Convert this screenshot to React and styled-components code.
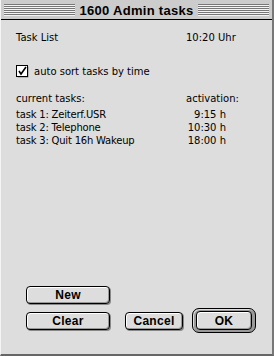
import React from "react";
import styled, { createGlobalStyle } from "styled-components";

const GlobalStyle = createGlobalStyle`
	html, body {
		margin: 0;
		padding: 0;
		background: #dddddd;
	}
`;

const Window = styled.div`
	width: 274px;
	height: 356px;
	box-sizing: border-box;
	display: flex;
	flex-direction: column;
	background: #dddddd;
	border-left: 1px solid #f4f4f4;
	border-right: 2px solid #777777;
	border-bottom: 2px solid #666666;
	font-family: "DejaVu Sans", "Liberation Sans", sans-serif;
	font-size: 10px;
	color: #000;
`;

const TitleBar = styled.div`
	height: 20px;
	flex-shrink: 0;
	display: flex;
	align-items: center;
	gap: 4px;
	padding: 0 3px 0 3px;
	background: #cccccc;
	border-bottom: 1px solid #000;
	box-sizing: border-box;
`;

const Stripes = styled.div`
	flex: 1;
	height: 12px;
	margin-top: 1px;
	background: repeating-linear-gradient(
		to bottom,
		#777777 0px,
		#777777 1px,
		#f4f4f4 1px,
		#f4f4f4 2px
	);
`;

const Title = styled.div`
	font-family: "Liberation Sans", Arial, sans-serif;
	font-weight: bold;
	font-size: 13px;
	letter-spacing: 0.3px;
	padding-top: 1px;
`;

const Content = styled.div`
	flex: 1;
	display: flex;
	flex-direction: column;
	padding: 11px 0 0 15px;
`;

const Row = styled.div`
	display: grid;
	grid-template-columns: 170px 1fr;
	height: 13px;
	line-height: 13px;
	letter-spacing: ${(p) => (p.tight ? "-0.2px" : "0")};
	margin-top: ${(p) => p.gap || 0}px;
`;

const Time = styled.div`
	width: 40px;
	text-align: right;
	letter-spacing: 0;
`;

const CheckRow = styled.label`
	display: flex;
	align-items: center;
	gap: 5px;
	margin-top: 21px;
	height: 13px;
`;

const Box = styled.svg`
	width: 13px;
	height: 13px;
	display: block;
`;

const Buttons = styled.div`
	margin-top: auto;
	display: grid;
	grid-template-columns: 84px 15px 58px 9px 64px;
	row-gap: 4px;
	align-items: center;
	padding: 0 0 21px 10px;
`;

const Button = styled.div`
	grid-column: ${(p) => p.col};
	grid-row: ${(p) => p.row};
	height: 18px;
	box-sizing: border-box;
	border: 1px solid #000;
	border-radius: 4px;
	background: #dddddd;
	box-shadow: inset 1px 1px 0 #ffffff, inset -1px -1px 0 #999999,
		1px 1px 0 #888888;
	display: flex;
	align-items: center;
	justify-content: center;
	font-family: "Liberation Sans", Arial, sans-serif;
	font-weight: bold;
	font-size: 12px;
	letter-spacing: 0.3px;
`;

const DefaultRing = styled.div`
	grid-column: 5;
	grid-row: 2;
	height: 25px;
	box-sizing: border-box;
	border: 1px solid #000;
	border-radius: 7px;
	background: #999999;
	box-shadow: inset 1px 1px 0 #dddddd;
	padding: 2px 3px 2px 3px;
	display: flex;
	align-items: stretch;
`;

const DefaultButton = styled(Button)`
	flex: 1;
	height: auto;
	box-shadow: inset 1px 1px 0 #ffffff, inset -1px -1px 0 #999999;
`;

const tasks = [
	{ name: "task 1: Zeiterf.USR", time: "9:15 h" },
	{ name: "task 2: Telephone", time: "10:30 h" },
	{ name: "task 3: Quit 16h Wakeup", time: "18:00 h" },
];

const CheckBox = () => (
	<Box viewBox="0 0 13 13">
		<rect x="1.5" y="1.5" width="11" height="11" fill="#888" />
		<rect x="0.5" y="0.5" width="11" height="11" fill="#fff" stroke="#000" />
		<path d="M3 6 L5 9 L10 2" fill="none" stroke="#000" strokeWidth="1.6" />
	</Box>
);

const App = () => {
	return (
		<>
			<GlobalStyle />
			<Window>
				<TitleBar>
					<Stripes />
					<Title>1600 Admin tasks</Title>
					<Stripes />
				</TitleBar>
				<Content>
					<Row>
						<span>Task List</span>
						<span>10:20 Uhr</span>
					</Row>
					<CheckRow>
						<CheckBox />
						<span>auto sort tasks by time</span>
					</CheckRow>
					<Row gap={14}>
						<span>current tasks:</span>
						<span>activation:</span>
					</Row>
					{tasks.map((t, i) => (
						<Row key={t.name} gap={i === 0 ? 3 : 0} tight>
							<span>{t.name}</span>
							<Time>{t.time}</Time>
						</Row>
					))}
					<Buttons>
						<Button col={1} row={1}>New</Button>
						<Button col={1} row={2}>Clear</Button>
						<Button col={3} row={2}>Cancel</Button>
						<DefaultRing>
							<DefaultButton>OK</DefaultButton>
						</DefaultRing>
					</Buttons>
				</Content>
			</Window>
		</>
	);
};

export default App;
